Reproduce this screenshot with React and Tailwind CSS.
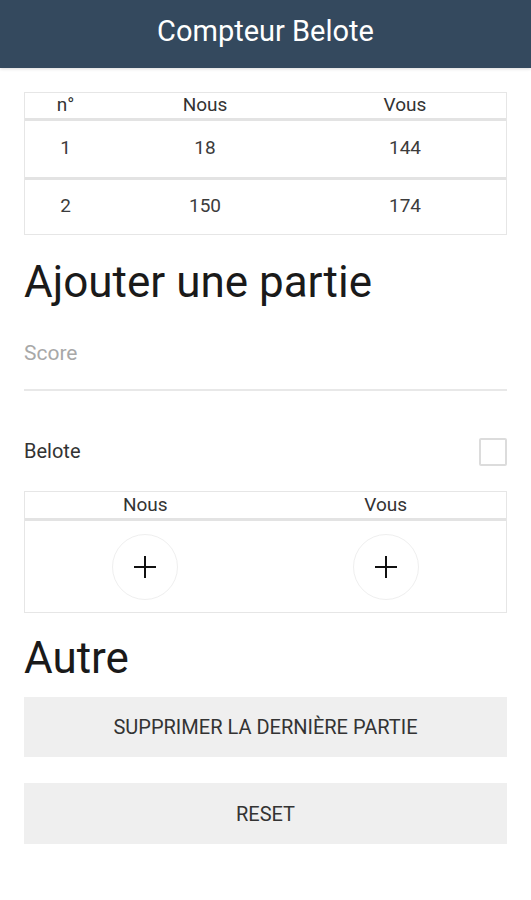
import React from "react";

function Plus() {
  return (
    <svg width="22" height="22" viewBox="0 0 22 22">
      <line x1="11" y1="0" x2="11" y2="22" stroke="#111" strokeWidth="2" />
      <line x1="0" y1="11" x2="22" y2="11" stroke="#111" strokeWidth="2" />
    </svg>
  );
}

export default function App() {
  const rows = [
    ["1", "18", "144"],
    ["2", "150", "174"],
  ];
  return (
    <div className="w-[531px] h-[900px] bg-white font-['Roboto',sans-serif] text-[#222]">
      <div className="h-[68px] bg-[#34495e] flex items-center justify-center pb-[5px] shadow-[0_1px_3px_rgba(0,0,0,0.15)]">
        <span className="text-white text-[29px] leading-none">Compteur Belote</span>
      </div>
      <div className="px-[24px]">
        <div className="mt-[24px] border border-[#e6e6e6]">
          <div className="grid grid-cols-[81px_198px_1fr] h-[25px] items-center pb-[2px] text-[19px] leading-none text-[#333] text-center">
            <div>n°</div>
            <div>Nous</div>
            <div>Vous</div>
          </div>
          {rows.map((r, i) => (
            <React.Fragment key={i}>
              <div className="h-[3px] bg-[#e3e3e3]" />
              <div
                className={`grid grid-cols-[81px_198px_1fr] items-center pb-[4px] text-[19px] leading-none text-[#3c3c3c] text-center ${
                  i === 0 ? "h-[56px]" : "h-[54px]"
                }`}
              >
                <div>{r[0]}</div>
                <div>{r[1]}</div>
                <div>{r[2]}</div>
              </div>
            </React.Fragment>
          ))}
        </div>

        <h1 className="mt-[25px] text-[44px] leading-none text-[#1a1a1a]">Ajouter une partie</h1>

        <div className="pt-[37px] pb-[24px] border-b-2 border-[#e8e8e8]">
          <div className="text-[21px] leading-[24px] text-[#a8a8a8]">Score</div>
        </div>

        <div className="mt-[47px] h-[28px] flex items-center justify-between">
          <span className="text-[20px] leading-none text-[#333] pb-[2px]">Belote</span>
          <div className="w-[28px] h-[28px] border-2 border-[#dcdcdc] rounded-[2px]" />
        </div>

        <div className="mt-[25px] border border-[#e6e6e6]">
          <div className="grid grid-cols-2 h-[26px] items-center pb-[1px] text-[19px] leading-none text-[#333] text-center">
            <div>Nous</div>
            <div>Vous</div>
          </div>
          <div className="h-[3px] bg-[#e3e3e3]" />
          <div className="grid grid-cols-2 h-[91px] items-center">
            <div className="flex justify-center">
              <div className="w-[66px] h-[66px] rounded-full border border-[#efefef] flex items-center justify-center">
                <Plus />
              </div>
            </div>
            <div className="flex justify-center">
              <div className="w-[66px] h-[66px] rounded-full border border-[#efefef] flex items-center justify-center">
                <Plus />
              </div>
            </div>
          </div>
        </div>

        <h1 className="mt-[23px] text-[44px] leading-none text-[#1a1a1a]">Autre</h1>

        <div className="mt-[17px] h-[60px] bg-[#efefef] flex items-center justify-center text-[20px] leading-none text-[#333]">
          SUPPRIMER LA DERNIÈRE PARTIE
        </div>
        <div className="mt-[26px] h-[61px] bg-[#efefef] flex items-center justify-center text-[20px] leading-none text-[#333]">
          RESET
        </div>
      </div>
    </div>
  );
}
